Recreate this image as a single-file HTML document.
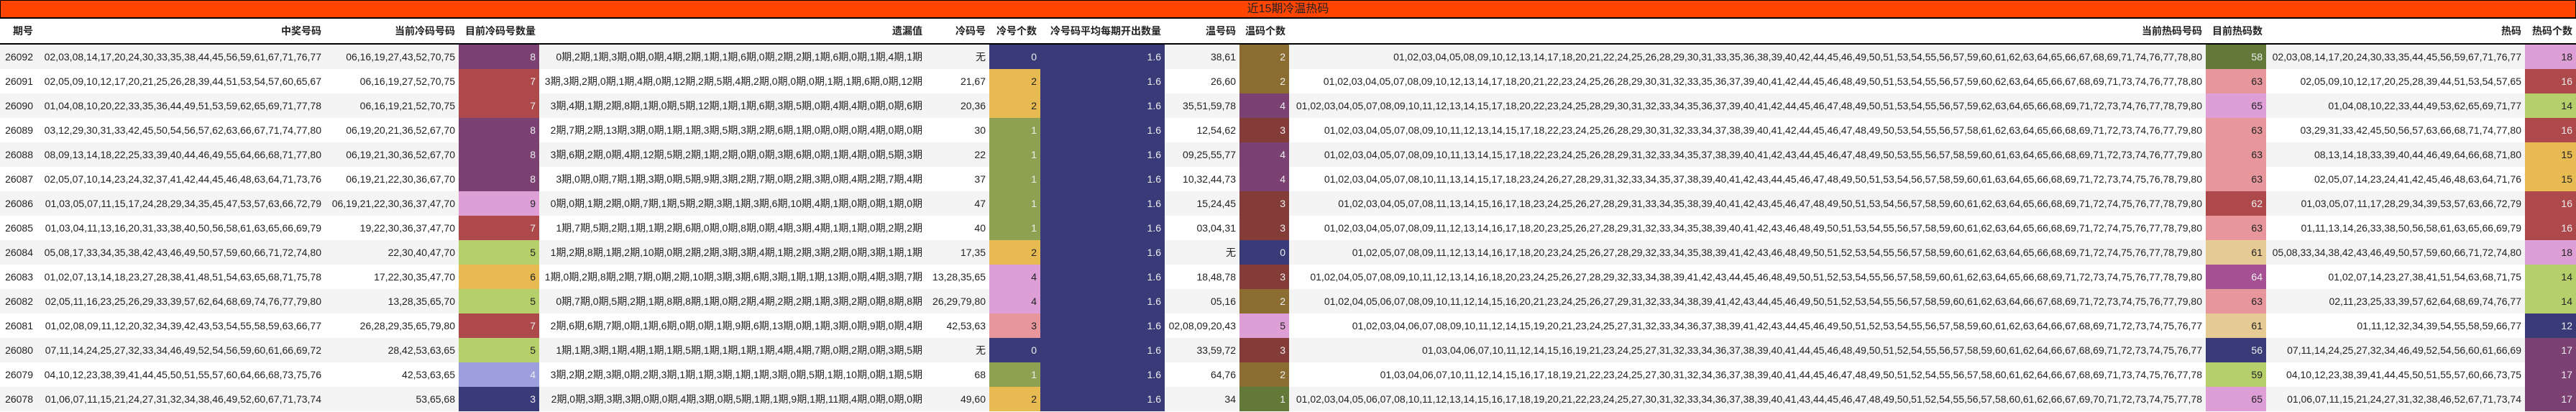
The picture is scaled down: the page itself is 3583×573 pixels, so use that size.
<!DOCTYPE html>
<html><head><meta charset="utf-8">
<style>
html,body{margin:0;padding:0;background:#fff;}
body{width:3583px;height:573px;overflow:hidden;font-family:"Liberation Sans","Noto Sans CJK SC",sans-serif;color:#222;}
.title{height:24px;background:#ff4500;border-top:1px solid #000;border-bottom:2px solid #000;border-left:1px solid #000;border-right:1px solid #000;box-sizing:border-box;height:26px;text-align:center;font-size:16px;line-height:23px;color:#222;}
table{border-collapse:collapse;table-layout:fixed;width:3583px;font-size:14px;}
th,td{padding:0 5px 0 0;text-align:right;white-space:nowrap;overflow:hidden;}
th{height:34px;font-weight:bold;border-bottom:2px solid #000;}
td{height:34px;}
tr.g td{background:#f4f4f4;}
tbody tr td.c{color:#eee;}
tbody tr td.k{color:#222;}
</style></head><body>
<div class="title">近15期冷温热码</div>
<table>
<colgroup>
<col style="width:51px"><col style="width:401px"><col style="width:186px"><col style="width:112px"><col style="width:538px"><col style="width:88px"><col style="width:71px"><col style="width:173px"><col style="width:104px"><col style="width:69px"><col style="width:1275px"><col style="width:84px"><col style="width:360px"><col style="width:71px">
</colgroup>
<thead><tr><th>期号</th><th>中奖号码</th><th>当前冷码号码</th><th>目前冷码号数量</th><th>遗漏值</th><th>冷码号</th><th>冷号个数</th><th>冷号码平均每期开出数量</th><th>温号码</th><th>温码个数</th><th>当前热码号码</th><th>目前热码数</th><th>热码</th><th>热码个数</th></tr></thead>
<tbody>
<tr class="g"><td>26092</td><td>02,03,08,14,17,20,24,30,33,35,38,44,45,56,59,61,67,71,76,77</td><td>06,16,19,27,43,52,70,75</td><td class="c" style="background:#7b4173">8</td><td>0期,2期,1期,3期,0期,0期,4期,2期,1期,1期,6期,0期,2期,2期,1期,6期,0期,1期,4期,1期</td><td>无</td><td class="c" style="background:#393b79">0</td><td class="c" style="background:#393b79">1.6</td><td>38,61</td><td class="c" style="background:#8c6d31">2</td><td>01,02,03,04,05,08,09,10,12,13,14,17,18,20,21,22,24,25,26,28,29,30,31,33,35,36,38,39,40,42,44,45,46,49,50,51,53,54,55,56,57,59,60,61,62,63,64,65,66,67,68,69,71,74,76,77,78,80</td><td class="c" style="background:#637939">58</td><td>02,03,08,14,17,20,24,30,33,35,44,45,56,59,67,71,76,77</td><td class="k" style="background:#de9ed6">18</td></tr>
<tr><td>26091</td><td>02,05,09,10,12,17,20,21,25,26,28,39,44,51,53,54,57,60,65,67</td><td>06,16,19,27,52,70,75</td><td class="c" style="background:#ad494a">7</td><td>3期,3期,2期,0期,1期,4期,0期,12期,2期,5期,4期,2期,0期,0期,0期,1期,1期,6期,0期,12期</td><td>21,67</td><td class="k" style="background:#e7ba52">2</td><td class="c" style="background:#393b79">1.6</td><td>26,60</td><td class="c" style="background:#8c6d31">2</td><td>01,02,03,04,05,07,08,09,10,12,13,14,17,18,20,21,22,23,24,25,26,28,29,30,31,32,33,35,36,37,39,40,41,42,44,45,46,48,49,50,51,53,54,55,56,57,59,60,62,63,64,65,66,67,68,69,71,73,74,76,77,78,80</td><td class="k" style="background:#e7969c">63</td><td>02,05,09,10,12,17,20,25,28,39,44,51,53,54,57,65</td><td class="c" style="background:#ad494a">16</td></tr>
<tr class="g"><td>26090</td><td>01,04,08,10,20,22,33,35,36,44,49,51,53,59,62,65,69,71,77,78</td><td>06,16,19,21,52,70,75</td><td class="c" style="background:#ad494a">7</td><td>3期,4期,1期,2期,8期,1期,0期,5期,12期,1期,1期,6期,3期,5期,0期,4期,4期,0期,0期,6期</td><td>20,36</td><td class="k" style="background:#e7ba52">2</td><td class="c" style="background:#393b79">1.6</td><td>35,51,59,78</td><td class="c" style="background:#7b4173">4</td><td>01,02,03,04,05,07,08,09,10,11,12,13,14,15,17,18,20,22,23,24,25,28,29,30,31,32,33,34,35,36,37,39,40,41,42,44,45,46,47,48,49,50,51,53,54,55,56,57,59,62,63,64,65,66,68,69,71,72,73,74,76,77,78,79,80</td><td class="k" style="background:#de9ed6">65</td><td>01,04,08,10,22,33,44,49,53,62,65,69,71,77</td><td class="k" style="background:#b5cf6b">14</td></tr>
<tr><td>26089</td><td>03,12,29,30,31,33,42,45,50,54,56,57,62,63,66,67,71,74,77,80</td><td>06,19,20,21,36,52,67,70</td><td class="c" style="background:#7b4173">8</td><td>2期,7期,2期,13期,3期,0期,1期,1期,3期,5期,3期,2期,6期,1期,0期,0期,0期,4期,0期,0期</td><td>30</td><td class="c" style="background:#8ca252">1</td><td class="c" style="background:#393b79">1.6</td><td>12,54,62</td><td class="c" style="background:#843c39">3</td><td>01,02,03,04,05,07,08,09,10,11,12,13,14,15,17,18,22,23,24,25,26,28,29,30,31,32,33,34,37,38,39,40,41,42,44,45,46,47,48,49,50,53,54,55,56,57,58,61,62,63,64,65,66,68,69,71,72,73,74,76,77,79,80</td><td class="k" style="background:#e7969c">63</td><td>03,29,31,33,42,45,50,56,57,63,66,68,71,74,77,80</td><td class="c" style="background:#ad494a">16</td></tr>
<tr class="g"><td>26088</td><td>08,09,13,14,18,22,25,33,39,40,44,46,49,55,64,66,68,71,77,80</td><td>06,19,21,30,36,52,67,70</td><td class="c" style="background:#7b4173">8</td><td>3期,6期,2期,0期,4期,12期,5期,2期,1期,2期,0期,0期,3期,6期,0期,1期,4期,0期,5期,3期</td><td>22</td><td class="c" style="background:#8ca252">1</td><td class="c" style="background:#393b79">1.6</td><td>09,25,55,77</td><td class="c" style="background:#7b4173">4</td><td>01,02,03,04,05,07,08,09,10,11,13,14,15,17,18,22,23,24,25,26,28,29,31,32,33,34,35,37,38,39,40,41,42,43,44,45,46,47,48,49,50,53,55,56,57,58,59,60,61,63,64,65,66,68,69,71,72,73,74,76,77,79,80</td><td class="k" style="background:#e7969c">63</td><td>08,13,14,18,33,39,40,44,46,49,64,66,68,71,80</td><td class="k" style="background:#e7ba52">15</td></tr>
<tr><td>26087</td><td>02,05,07,10,14,23,24,32,37,41,42,44,45,46,48,63,64,71,73,76</td><td>06,19,21,22,30,36,67,70</td><td class="c" style="background:#7b4173">8</td><td>3期,0期,0期,7期,1期,3期,0期,5期,9期,3期,2期,7期,0期,2期,3期,0期,4期,2期,7期,4期</td><td>37</td><td class="c" style="background:#8ca252">1</td><td class="c" style="background:#393b79">1.6</td><td>10,32,44,73</td><td class="c" style="background:#7b4173">4</td><td>01,02,03,04,05,07,08,10,11,13,14,15,17,18,23,24,26,27,28,29,31,32,33,34,35,37,38,39,40,41,42,43,44,45,46,47,48,49,50,51,53,54,56,57,58,59,60,61,63,64,65,66,68,69,71,72,73,74,75,76,78,79,80</td><td class="k" style="background:#e7969c">63</td><td>02,05,07,14,23,24,41,42,45,46,48,63,64,71,76</td><td class="k" style="background:#e7ba52">15</td></tr>
<tr class="g"><td>26086</td><td>01,03,05,07,11,15,17,24,28,29,34,35,45,47,53,57,63,66,72,79</td><td>06,19,21,22,30,36,37,47,70</td><td class="k" style="background:#de9ed6">9</td><td>0期,0期,1期,2期,0期,7期,1期,5期,2期,3期,1期,3期,6期,10期,4期,1期,0期,0期,1期,0期</td><td>47</td><td class="c" style="background:#8ca252">1</td><td class="c" style="background:#393b79">1.6</td><td>15,24,45</td><td class="c" style="background:#843c39">3</td><td>01,02,03,04,05,07,08,11,13,14,15,16,17,18,23,24,25,26,27,28,29,31,33,34,35,38,39,40,41,42,43,45,46,47,48,49,50,51,53,54,56,57,58,59,60,61,62,63,64,65,66,68,69,71,72,74,75,76,77,78,79,80</td><td class="c" style="background:#ad494a">62</td><td>01,03,05,07,11,17,28,29,34,39,53,57,63,66,72,79</td><td class="c" style="background:#ad494a">16</td></tr>
<tr><td>26085</td><td>01,03,04,11,13,16,20,31,33,38,40,50,56,58,61,63,65,66,69,79</td><td>19,22,30,36,37,47,70</td><td class="c" style="background:#ad494a">7</td><td>1期,7期,5期,2期,1期,1期,2期,6期,0期,0期,8期,0期,4期,3期,4期,1期,1期,0期,2期,2期</td><td>40</td><td class="c" style="background:#8ca252">1</td><td class="c" style="background:#393b79">1.6</td><td>03,04,31</td><td class="c" style="background:#843c39">3</td><td>01,02,03,04,05,07,08,09,11,12,13,14,16,17,18,20,23,25,26,27,28,29,31,32,33,34,35,38,39,40,41,42,43,46,48,49,50,51,53,54,55,56,57,58,59,60,61,62,63,64,65,66,68,69,71,72,74,75,76,77,78,79,80</td><td class="k" style="background:#e7969c">63</td><td>01,11,13,14,26,33,38,50,56,58,61,63,65,66,69,79</td><td class="c" style="background:#ad494a">16</td></tr>
<tr class="g"><td>26084</td><td>05,08,17,33,34,35,38,42,43,46,49,50,57,59,60,66,71,72,74,80</td><td>22,30,40,47,70</td><td class="k" style="background:#b5cf6b">5</td><td>1期,2期,8期,1期,2期,10期,0期,2期,2期,3期,3期,4期,1期,2期,3期,2期,0期,3期,1期,1期</td><td>17,35</td><td class="k" style="background:#e7ba52">2</td><td class="c" style="background:#393b79">1.6</td><td>无</td><td class="c" style="background:#393b79">0</td><td>01,02,05,07,08,09,11,12,13,14,16,17,18,20,23,24,25,26,27,28,29,32,33,34,35,38,39,41,42,43,46,48,49,50,51,52,53,54,55,56,57,58,59,60,61,62,63,64,65,66,68,69,71,72,74,75,76,77,78,79,80</td><td class="k" style="background:#e7cb94">61</td><td>05,08,33,34,38,42,43,46,49,50,57,59,60,66,71,72,74,80</td><td class="k" style="background:#de9ed6">18</td></tr>
<tr><td>26083</td><td>01,02,07,13,14,18,23,27,28,38,41,48,51,54,63,65,68,71,75,78</td><td>17,22,30,35,47,70</td><td class="k" style="background:#e7ba52">6</td><td>1期,0期,2期,8期,2期,7期,0期,2期,10期,3期,3期,6期,3期,1期,1期,13期,0期,4期,3期,7期</td><td>13,28,35,65</td><td class="k" style="background:#de9ed6">4</td><td class="c" style="background:#393b79">1.6</td><td>18,48,78</td><td class="c" style="background:#843c39">3</td><td>01,02,04,05,07,08,09,10,11,12,13,14,16,18,20,23,24,25,26,27,28,29,32,33,34,38,39,41,42,43,44,45,46,48,49,50,51,52,53,54,55,56,57,58,59,60,61,62,63,64,65,66,68,69,71,72,73,74,75,76,77,78,79,80</td><td class="c" style="background:#a55194">64</td><td>01,02,07,14,23,27,38,41,51,54,63,68,71,75</td><td class="k" style="background:#b5cf6b">14</td></tr>
<tr class="g"><td>26082</td><td>02,05,11,16,23,25,26,29,33,39,57,62,64,68,69,74,76,77,79,80</td><td>13,28,35,65,70</td><td class="k" style="background:#b5cf6b">5</td><td>0期,7期,0期,5期,2期,1期,8期,8期,1期,0期,2期,4期,2期,2期,1期,3期,2期,0期,8期,8期</td><td>26,29,79,80</td><td class="k" style="background:#de9ed6">4</td><td class="c" style="background:#393b79">1.6</td><td>05,16</td><td class="c" style="background:#8c6d31">2</td><td>01,02,04,05,06,07,08,09,10,11,12,14,15,16,20,21,23,24,25,26,27,29,31,32,33,34,38,39,41,42,43,44,45,46,49,50,51,52,53,54,55,56,57,58,59,60,61,62,63,64,66,67,68,69,71,72,73,74,75,76,77,79,80</td><td class="k" style="background:#e7969c">63</td><td>02,11,23,25,33,39,57,62,64,68,69,74,76,77</td><td class="k" style="background:#b5cf6b">14</td></tr>
<tr><td>26081</td><td>01,02,08,09,11,12,20,32,34,39,42,43,53,54,55,58,59,63,66,77</td><td>26,28,29,35,65,79,80</td><td class="c" style="background:#ad494a">7</td><td>2期,6期,6期,7期,0期,1期,6期,0期,0期,1期,9期,6期,13期,0期,1期,3期,0期,9期,0期,4期</td><td>42,53,63</td><td class="k" style="background:#e7969c">3</td><td class="c" style="background:#393b79">1.6</td><td>02,08,09,20,43</td><td class="k" style="background:#de9ed6">5</td><td>01,02,03,04,06,07,08,09,10,11,12,14,15,19,20,21,23,24,25,27,31,32,33,34,36,37,38,39,41,42,43,44,45,46,49,50,51,52,53,54,55,56,57,58,59,60,61,62,63,64,66,67,68,69,71,72,73,74,75,76,77</td><td class="k" style="background:#e7cb94">61</td><td>01,11,12,32,34,39,54,55,58,59,66,77</td><td class="c" style="background:#393b79">12</td></tr>
<tr class="g"><td>26080</td><td>07,11,14,24,25,27,32,33,34,46,49,52,54,56,59,60,61,66,69,72</td><td>28,42,53,63,65</td><td class="k" style="background:#b5cf6b">5</td><td>1期,1期,3期,1期,4期,1期,1期,5期,1期,1期,1期,1期,4期,4期,7期,0期,2期,0期,3期,5期</td><td>无</td><td class="c" style="background:#393b79">0</td><td class="c" style="background:#393b79">1.6</td><td>33,59,72</td><td class="c" style="background:#843c39">3</td><td>01,03,04,06,07,10,11,12,14,15,16,19,21,23,24,25,27,31,32,33,34,36,37,38,39,40,41,44,45,46,48,49,50,51,52,54,55,56,57,58,59,60,61,62,64,66,67,68,69,71,72,73,74,75,76,77</td><td class="c" style="background:#393b79">56</td><td>07,11,14,24,25,27,32,34,46,49,52,54,56,60,61,66,69</td><td class="c" style="background:#7b4173">17</td></tr>
<tr><td>26079</td><td>04,10,12,23,38,39,41,44,45,50,51,55,57,60,64,66,68,73,75,76</td><td>42,53,63,65</td><td class="c" style="background:#9c9ede">4</td><td>3期,2期,2期,3期,0期,2期,3期,1期,1期,3期,1期,1期,3期,0期,5期,1期,10期,0期,1期,5期</td><td>68</td><td class="c" style="background:#8ca252">1</td><td class="c" style="background:#393b79">1.6</td><td>64,76</td><td class="c" style="background:#8c6d31">2</td><td>01,03,04,06,07,10,11,12,14,15,16,17,18,19,21,22,23,24,25,27,30,31,32,34,36,37,38,39,40,41,44,45,46,47,48,49,50,51,52,54,55,56,57,58,60,61,62,64,66,67,68,69,71,73,74,75,76,77,78</td><td class="k" style="background:#b5cf6b">59</td><td>04,10,12,23,38,39,41,44,45,50,51,55,57,60,66,73,75</td><td class="c" style="background:#7b4173">17</td></tr>
<tr class="g"><td>26078</td><td>01,06,07,11,15,21,24,27,31,32,34,38,46,49,52,60,67,71,73,74</td><td>53,65,68</td><td class="c" style="background:#393b79">3</td><td>2期,0期,3期,3期,3期,0期,0期,4期,3期,0期,5期,1期,1期,9期,1期,11期,4期,0期,0期,0期</td><td>49,60</td><td class="k" style="background:#e7ba52">2</td><td class="c" style="background:#393b79">1.6</td><td>34</td><td class="c" style="background:#637939">1</td><td>01,02,03,04,05,06,07,08,10,11,12,13,14,15,16,17,18,19,20,21,22,23,24,25,27,30,31,32,33,34,36,37,38,39,40,41,43,44,45,46,47,48,49,50,51,52,54,55,56,57,58,60,61,62,66,67,69,70,71,72,73,74,75,77,78</td><td class="k" style="background:#de9ed6">65</td><td>01,06,07,11,15,21,24,27,31,32,38,46,52,67,71,73,74</td><td class="c" style="background:#7b4173">17</td></tr>
</tbody></table>
</body></html>
